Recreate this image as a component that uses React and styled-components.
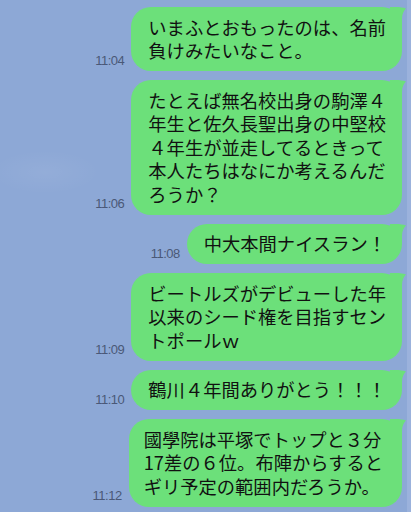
import React from "react";
import styled, { createGlobalStyle } from "styled-components";

const Global = createGlobalStyle`
  html, body {
    margin: 0;
    padding: 0;
  }
  body {
    background:
      radial-gradient(ellipse 55px 22px at 45px 172px, rgba(255,255,255,0.06), rgba(255,255,255,0) 100%),
      linear-gradient(to right, #8da8d6 calc(100% - 4px), #9bb2dc calc(100% - 4px));
    background-color: #8da8d6;
    min-height: 512px;
  }
`;

const Chat = styled.div`
  display: flex;
  flex-direction: column;
  align-items: flex-end;
  gap: 9px;
  padding: 7px 9px 0 0;
`;

const Row = styled.div`
  display: flex;
  align-items: flex-end;
  gap: 7px;
`;

const Time = styled.span`
  font-family: "Liberation Sans", Arial, sans-serif;
  font-size: 13px;
  letter-spacing: -0.5px;
  line-height: 15px;
  color: #4a5877;
  margin-bottom: 3.5px;
`;

const Bubble = styled.div`
  position: relative;
  background: #6ce07a;
  border-radius: 20px;
  padding: 8.5px ${(p) => p.$pr}px 8.5px ${(p) => p.$pl}px;
  font-family: "Noto Sans CJK JP", "Noto Sans", sans-serif;
  font-size: 18.3px;
  line-height: 23.5px;
  color: #111;
  white-space: nowrap;
`;

const Line = styled.div`
  position: relative;
  z-index: 1;
`;

const Tail = styled.svg`
  position: absolute;
  top: 0;
  right: -4px;
  width: 16px;
  height: 20px;
  overflow: visible;
`;

const messages = [
  { time: "11:04", lines: ["いまふとおもったのは、名前", "負けみたいなこと。"] },
  {
    time: "11:06",
    lines: [
      "たとえば無名校出身の駒澤４",
      "年生と佐久長聖出身の中堅校",
      "４年生が並走してるときって",
      "本人たちはなにか考えるんだ",
      "ろうか？",
    ],
  },
  { time: "11:08", lines: ["中大本間ナイスラン！"] },
  {
    time: "11:09",
    lines: ["ビートルズがデビューした年", "以来のシード権を目指すセン", "トポールｗ"],
  },
  { time: "11:10", lines: ["鶴川４年間ありがとう！！！"] },
  {
    time: "11:12",
    lines: ["國學院は平塚でトップと３分", "17差の６位。布陣からすると", "ギリ予定の範囲内だろうか。"],
    pl: 15,
    pr: 19,
  },
];

export default function App() {
  return (
    <>
      <Global />
      <Chat>
        {messages.map((m, i) => (
          <Row key={i}>
            <Time>{m.time}</Time>
            <Bubble $pl={m.pl ?? 17} $pr={m.pr ?? 16}>
              <Tail viewBox="0 0 16 20">
                <path
                  d="M0 0 L6 0 C10 0 13 0.5 16 1.5 C13.5 4 12 7.5 12 12 L12 20 L0 20 Z"
                  fill="#6ce07a"
                />
              </Tail>
              {m.lines.map((l, j) => (
                <Line key={j}>{l}</Line>
              ))}
            </Bubble>
          </Row>
        ))}
      </Chat>
    </>
  );
}
